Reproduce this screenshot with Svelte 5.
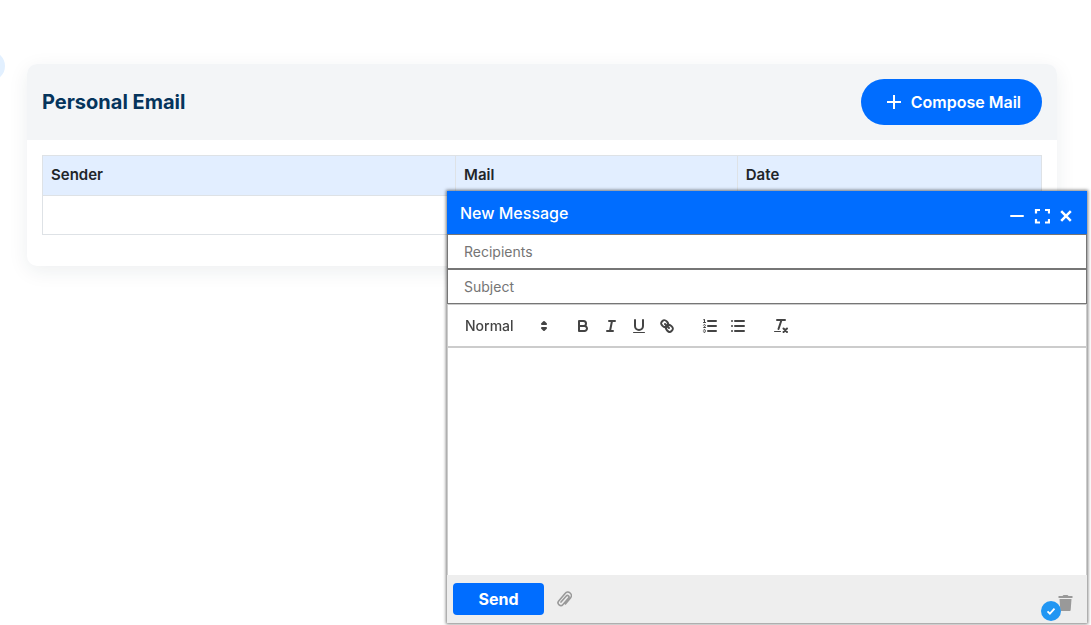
<script>
  let recipients = $state('');
  let subject = $state('');
  let format = $state('Normal');
</script>

<main class="page">
  <button class="side-toggle" aria-label="Open sidebar"></button>

  <section class="card">
    <header class="card-header">
      <h1>Personal Email</h1>
      <button class="compose-button">
        <svg width="16" height="16" viewBox="0 0 16 16" aria-hidden="true">
          <path d="M8 1v14M1 8h14" stroke="currentColor" stroke-width="2" fill="none" />
        </svg>
        Compose Mail
      </button>
    </header>
    <div class="card-body">
      <table>
        <thead>
          <tr><th class="sender">Sender</th><th class="mail">Mail</th><th>Date</th></tr>
        </thead>
        <tbody>
          <tr><td colspan="3"></td></tr>
        </tbody>
      </table>
    </div>
  </section>

  <form class="composer" onsubmit={(e) => e.preventDefault()}>
    <header class="composer-header">
      <h2>New Message</h2>
      <div class="window-actions">
        <button type="button" aria-label="Minimize">
          <svg width="14" height="16" viewBox="0 0 14 16"><path d="M1 8h12" stroke="currentColor" stroke-width="2" stroke-linecap="round" /></svg>
        </button>
        <button type="button" aria-label="Full screen">
          <svg width="16" height="16" viewBox="0 0 16 16"><path d="M2 5.500V2H6M11 2h4v3.500M15 11v3.500h-4M6 14.500H2V11" stroke="currentColor" stroke-width="2.200" fill="none" /></svg>
        </button>
        <button type="button" aria-label="Close">
          <svg width="12" height="16" viewBox="0 0 12 16"><path d="M1.200 3.200l9.600 9.600M10.800 3.200l-9.600 9.600" stroke="currentColor" stroke-width="2.500" /></svg>
        </button>
      </div>
    </header>

    <input class="field" type="text" placeholder="Recipients" aria-label="Recipients" bind:value={recipients} />
    <input class="field" type="text" placeholder="Subject" aria-label="Subject" bind:value={subject} />

    <div class="toolbar">
      <div class="picker">
        <select aria-label="Text style" bind:value={format}>
          <option>Normal</option>
          <option>Heading 1</option>
          <option>Heading 2</option>
        </select>
        <svg width="18" height="18" viewBox="0 0 18 18" aria-hidden="true">
          <polygon class="fill stroke" points="7 11 9 13 11 11 7 11" />
          <polygon class="fill stroke" points="7 7 9 5 11 7 7 7" />
        </svg>
      </div>
      <div class="group">
        <button type="button" aria-label="Bold">
          <svg viewBox="0 0 18 18">
            <path class="stroke" d="M5,4H9.500A2.500,2.500,0,0,1,12,6.500v0A2.500,2.500,0,0,1,9.500,9H5A0,0,0,0,1,5,9V4A0,0,0,0,1,5,4Z" />
            <path class="stroke" d="M5,9h5.500A2.500,2.500,0,0,1,13,11.500v0A2.500,2.500,0,0,1,10.500,14H5a0,0,0,0,1,0,0V9A0,0,0,0,1,5,9Z" />
          </svg>
        </button>
        <button type="button" aria-label="Italic">
          <svg viewBox="0 0 18 18">
            <path class="stroke" d="M7 4h6M5 14h6M8 14l2-10" />
          </svg>
        </button>
        <button type="button" aria-label="Underline">
          <svg viewBox="0 0 18 18">
            <path class="stroke" d="M5,3V9a4.012,4.012,0,0,0,4,4H9a4.012,4.012,0,0,0,4-4V3" />
            <rect class="fill" height="1" rx="0.500" ry="0.500" width="12" x="3" y="15" />
          </svg>
        </button>
        <button type="button" aria-label="Link">
          <svg viewBox="0 0 18 18">
            <path class="stroke" d="M7 7l4 4" />
            <path class="stroke" d="M8.900,4.577a3.476,3.476,0,0,1,.36,4.679A3.476,3.476,0,0,1,4.577,8.900C3.185,7.500,2.035,6.400,4.217,4.217S7.500,3.185,8.900,4.577Z" />
            <path class="stroke" d="M13.423,9.100a3.476,3.476,0,0,0-4.679-.36,3.476,3.476,0,0,0,.36,4.679c1.392,1.392,2.500,2.542,4.679.36S14.815,10.500,13.423,9.100Z" />
          </svg>
        </button>
      </div>
      <div class="group">
        <button type="button" aria-label="Numbered list">
          <svg viewBox="0 0 18 18">
            <path class="stroke" d="M7 4h8M7 9h8M7 14h8" />
            <path class="stroke thin" d="M2.500 5.500h2" />
            <path class="fill" d="M3.500,6A0.500,0.500,0,0,1,3,5.500V3.085l-0.276.138A0.500,0.500,0,0,1,2.053,3c-0.124-.247-0.023-0.324.224-0.447l1-.5A0.500,0.500,0,0,1,4,2.500v3A0.500,0.500,0,0,1,3.500,6Z" />
            <path class="stroke thin" d="M4.500,10.500h-2c0-.234,1.850-1.076,1.850-2.234A0.959,0.959,0,0,0,2.500,8.156" />
            <path class="stroke thin" d="M2.500,14.846a0.959,0.959,0,0,0,1.850-.109A0.700,0.700,0,0,0,3.750,14a0.688,0.688,0,0,0,.6-0.736,0.959,0.959,0,0,0-1.850-.109" />
          </svg>
        </button>
        <button type="button" aria-label="Bulleted list">
          <svg viewBox="0 0 18 18">
            <path class="stroke" d="M6 4h9M6 9h9M6 14h9M3 4h0.010M3 9h0.010M3 14h0.010" />
          </svg>
        </button>
      </div>
      <div class="group">
        <button type="button" aria-label="Clear formatting">
          <svg viewBox="0 0 18 18">
            <path class="stroke" d="M5 3h8M6.500 12L9.500 3M11.500 11.500l3.500 3.500M15 11.500l-3.500 3.500" />
            <rect class="fill" height="1" rx="0.500" ry="0.500" width="7" x="2" y="14" />
          </svg>
        </button>
      </div>
    </div>

    <textarea aria-label="Message body"></textarea>

    <footer class="composer-footer">
      <button type="submit" class="send">Send</button>
      <button type="button" class="attach" aria-label="Attach file">
        <svg width="16" height="18" viewBox="0 0 16 18">
          <path d="M5 12.100L10.300 6a1.500 1.500 0 0 1 2.300 2L7 14.400a2.700 2.700 0 0 1-4.300-3.500L9.100 3.400a3.500 3.500 0 0 1 5.400 4.600L9.400 14" fill="none" stroke="#999" stroke-width="1.600" stroke-linecap="round" />
        </svg>
      </button>
      <button type="button" class="discard" aria-label="Discard draft">
        <svg width="16" height="18" viewBox="0 0 16 18">
          <path d="M1.500 2h4l1-1h4l1 1h4v2h-14zM2.500 5h12l-.8 11a1 1 0 0 1-1 1H4.300a1 1 0 0 1-1-1z" fill="#999" />
        </svg>
        <span class="status">
          <svg width="20" height="20" viewBox="0 0 20 20">
            <circle cx="10" cy="10" r="10" fill="#2196f3" />
            <path d="M6.500 10.300l2.400 2.400 4.600-5" fill="none" stroke="#fff" stroke-width="1.800" />
          </svg>
        </span>
      </button>
    </footer>
  </form>
</main>

<style>
  :global(body) {
    margin: 0;
    background: #fff;
  }
  .page {
    box-sizing: border-box;
    min-height: 100vh;
    padding: 64px 34px 0 27px;
    font-family: Inter, "Liberation Sans", sans-serif;
    color: #212529;
  }
  .page :global(*) {
    box-sizing: border-box;
  }
  button {
    border: 0;
    padding: 0;
    background: none;
    font: inherit;
    color: inherit;
    cursor: pointer;
  }
  svg {
    display: block;
  }
  .side-toggle {
    position: absolute;
    top: 51px;
    left: -25px;
    width: 30px;
    height: 30px;
    border-radius: 50%;
    background: #e2f0ff;
  }
  .card {
    border-radius: 10px;
    background: #fff;
    box-shadow: 0 5px 20px rgba(30, 50, 70, 0.08);
  }
  .card-header {
    display: flex;
    align-items: center;
    justify-content: space-between;
    padding: 15px;
    border-radius: 10px 10px 0 0;
    background: #f3f5f7;
  }
  h1 {
    margin: 0;
    font-size: 20px;
    line-height: 24px;
    font-weight: 700;
    color: #05345c;
  }
  .compose-button {
    display: flex;
    align-items: center;
    gap: 9px;
    height: 46px;
    padding: 0 21px 0 25px;
    border-radius: 23px;
    background: #006dff;
    color: #fff;
    font-size: 16px;
    font-weight: 600;
  }
  .card-body {
    padding: 15px 15px 31px;
  }
  table {
    width: 100%;
    border-collapse: collapse;
    table-layout: fixed;
    font-size: 15px;
    line-height: 22px;
  }
  th,
  td {
    height: 40px;
    padding: 8px;
    border: 1px solid #dee2e6;
    text-align: left;
  }
  td {
    height: 39px;
  }
  th {
    padding: 7px 8px 9px;
    background: #e2eeff;
    font-weight: 600;
  }
  .sender {
    width: 41.350%;
  }
  .mail {
    width: 28.200%;
  }
  .composer {
    position: fixed;
    right: 4px;
    bottom: 2px;
    display: flex;
    flex-direction: column;
    width: 640px;
    max-width: 100%;
    background: #fff;
    box-shadow: 0 0 3px 1px rgba(0, 0, 0, 0.5);
  }
  .composer-header {
    display: flex;
    align-items: center;
    justify-content: space-between;
    height: 43px;
    padding: 0 15px 0 13px;
    background: #006dff;
    color: #fff;
  }
  h2 {
    margin: 0;
    font-size: 16px;
    line-height: 24px;
    font-weight: 500;
  }
  .window-actions {
    display: flex;
    gap: 10px;
    padding-top: 6px;
  }
  .field {
    width: 100%;
    height: 35px;
    padding: 0 16px;
    border: 1px solid #767676;
    border-radius: 0;
    background: #fff;
    font: 14px/20px Inter, "Liberation Sans", sans-serif;
    color: #212529;
  }
  .field::placeholder {
    color: #757575;
    opacity: 1;
  }
  .toolbar {
    display: flex;
    align-items: center;
    gap: 15px;
    height: 43px;
    padding: 0 8px;
    border: 1px solid #ccc;
  }
  .picker {
    position: relative;
    width: 98px;
    color: #444;
  }
  .picker svg {
    position: absolute;
    top: 3px;
    right: 1px;
    pointer-events: none;
  }
  select {
    width: 100%;
    height: 24px;
    padding: 0 20px 0 9px;
    border: 0;
    appearance: none;
    background: none;
    font: 500 14px/24px Inter, "Liberation Sans", sans-serif;
    color: #444;
  }
  .group {
    display: flex;
  }
  .group button {
    width: 28px;
    height: 24px;
    padding: 3px 5px;
  }
  .group svg {
    width: 18px;
    height: 18px;
  }
  .stroke {
    fill: none;
    stroke: #444;
    stroke-width: 2;
    stroke-linecap: round;
    stroke-linejoin: round;
  }
  .fill {
    fill: #444;
  }
  .thin {
    stroke-width: 1;
  }
  textarea {
    display: block;
    width: 100%;
    height: 228px;
    padding: 12px 15px;
    border: 1px solid #ccc;
    border-bottom: 0;
    border-radius: 0;
    outline: 0;
    resize: none;
    font: 14px/20px Inter, "Liberation Sans", sans-serif;
  }
  .composer-footer {
    display: flex;
    align-items: center;
    gap: 12px;
    height: 48px;
    padding: 0 14px 0 6px;
    background: #eee;
  }
  .send {
    width: 91px;
    height: 32px;
    border-radius: 4px;
    background: #006dff;
    color: #fff;
    font-size: 16px;
    font-weight: 700;
  }
  .discard {
    position: relative;
    margin-left: auto;
    padding-top: 8px;
  }
  .status {
    position: absolute;
    top: 15px;
    left: -16px;
  }
</style>
